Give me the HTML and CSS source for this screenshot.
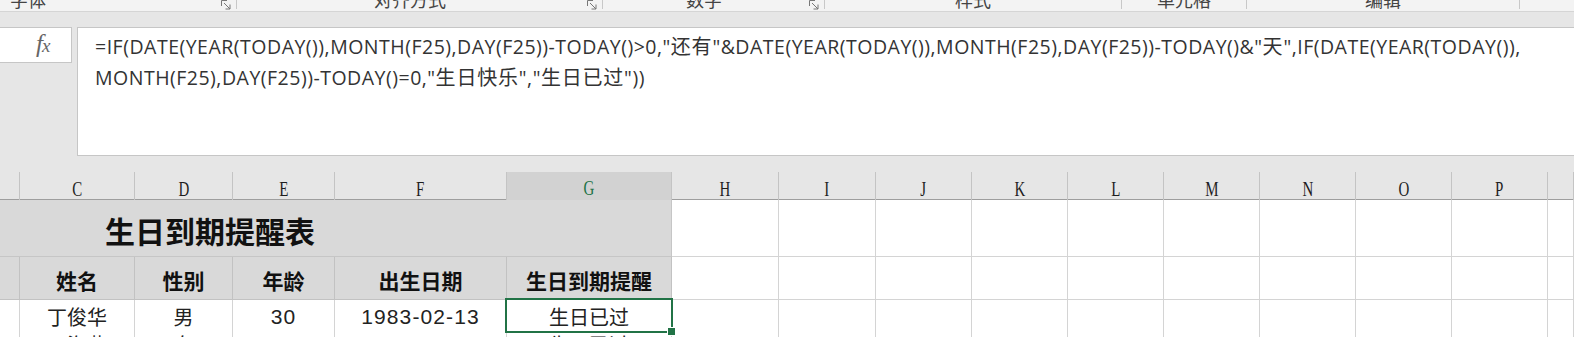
FILE: index.html
```html
<!DOCTYPE html>
<html lang="zh-CN">
<head>
    <meta charset="UTF-8">
    <meta name="viewport" content="width=device-width, initial-scale=1.0">
    <title>生日到期提醒表</title>
    <link rel="stylesheet" href="styles.css">
</head>
<body>

<div class="ribbon">
    <div class="group g-font"><span class="label">字体</span><span class="launcher"><svg width="12" height="12" viewBox="0 0 12 12"><path d="M1.5 7V1.5H7M4 4l6 6M10 5.5V10H5.5" fill="none" stroke="#777" stroke-width="1"/></svg></span></div>
    <div class="group g-align"><span class="label">对齐方式</span><span class="launcher"><svg width="12" height="12" viewBox="0 0 12 12"><path d="M1.5 7V1.5H7M4 4l6 6M10 5.5V10H5.5" fill="none" stroke="#777" stroke-width="1"/></svg></span></div>
    <div class="group g-number"><span class="label">数字</span><span class="launcher"><svg width="12" height="12" viewBox="0 0 12 12"><path d="M1.5 7V1.5H7M4 4l6 6M10 5.5V10H5.5" fill="none" stroke="#777" stroke-width="1"/></svg></span></div>
    <div class="group g-style"><span class="label">样式</span></div>
    <div class="group g-cells"><span class="label">单元格</span></div>
    <div class="group g-edit"><span class="label">编辑</span></div>
    <div class="group g-rest"></div>
</div>

<div class="formula-row">
    <div class="name-box"><span class="fx"><i>f</i><i class="fx-x">x</i></span></div>
    <div class="formula-box">
        <div class="formula">=IF(DATE(YEAR(TODAY()),MONTH(F25),DAY(F25))-TODAY()&gt;0,"<span class="cjk">还有</span>"&amp;DATE(YEAR(TODAY()),MONTH(F25),DAY(F25))-TODAY()&amp;"<span class="cjk">天</span>",IF(DATE(YEAR(TODAY()),<br>MONTH(F25),DAY(F25))-TODAY()=0,"<span class="cjk">生日快乐</span>","<span class="cjk">生日已过</span>"))</div>
    </div>
</div>

<div class="sheet">
    <div class="row col-heads">
        <div class="ch"></div>
        <div class="ch"><span>C</span></div>
        <div class="ch"><span>D</span></div>
        <div class="ch"><span>E</span></div>
        <div class="ch"><span>F</span></div>
        <div class="ch ch-active"><span>G</span></div>
        <div class="ch"><span>H</span></div>
        <div class="ch"><span>I</span></div>
        <div class="ch"><span>J</span></div>
        <div class="ch"><span>K</span></div>
        <div class="ch"><span>L</span></div>
        <div class="ch"><span>M</span></div>
        <div class="ch"><span>N</span></div>
        <div class="ch"><span>O</span></div>
        <div class="ch"><span>P</span></div>
        <div class="ch"></div>
    </div>

    <div class="row title-row">
        <div class="cell title">生日到期提醒表</div>
        <div class="cell"></div><div class="cell"></div><div class="cell"></div><div class="cell"></div><div class="cell"></div>
        <div class="cell"></div><div class="cell"></div><div class="cell"></div><div class="cell"></div><div class="cell"></div>
    </div>

    <div class="row head-row">
        <div class="cell th"></div>
        <div class="cell th">姓名</div>
        <div class="cell th">性别</div>
        <div class="cell th">年龄</div>
        <div class="cell th">出生日期</div>
        <div class="cell th">生日到期提醒</div>
        <div class="cell"></div><div class="cell"></div><div class="cell"></div><div class="cell"></div><div class="cell"></div>
        <div class="cell"></div><div class="cell"></div><div class="cell"></div><div class="cell"></div><div class="cell"></div>
    </div>

    <div class="row data-row">
        <div class="cell"></div>
        <div class="cell">丁俊华</div>
        <div class="cell">男</div>
        <div class="cell num">30</div>
        <div class="cell num">1983-02-13</div>
        <div class="cell sel">生日已过</div>
        <div class="cell"></div><div class="cell"></div><div class="cell"></div><div class="cell"></div><div class="cell"></div>
        <div class="cell"></div><div class="cell"></div><div class="cell"></div><div class="cell"></div><div class="cell"></div>
    </div>

    <div class="row data-row">
        <div class="cell"></div>
        <div class="cell">王海燕</div>
        <div class="cell">女</div>
        <div class="cell num">35</div>
        <div class="cell num">1978-05-16</div>
        <div class="cell">生日已过</div>
        <div class="cell"></div><div class="cell"></div><div class="cell"></div><div class="cell"></div><div class="cell"></div>
        <div class="cell"></div><div class="cell"></div><div class="cell"></div><div class="cell"></div><div class="cell"></div>
    </div>
</div>

</body>
</html>
```

FILE: styles.css
```css
* {
    box-sizing: border-box;
}
body {
    margin: 0;
    width: 1574px;
    height: 337px;
    overflow: hidden;
    background-color: #e6e6e6;
    font-family: "Liberation Sans", "Noto Sans CJK SC", sans-serif;
    color: #222;
}

/* ribbon group names, mostly scrolled off the top */
.ribbon {
    display: flex;
    height: 12px;
    background-color: #f3f3f3;
    border-bottom: 1px solid #d5d5d5;
    overflow: hidden;
    margin-bottom: 15px;
}
.group {
    display: flex;
    align-items: flex-start;
    height: 9px;
    border-right: 1px solid #c8c8c8;
}
.label {
    flex: 1;
    text-align: center;
    font-family: "Noto Sans CJK SC", sans-serif;
    font-size: 18px;
    line-height: 18px;
    margin-top: -10px;
    color: #444;
}
.launcher {
    width: 12px;
    margin: -3px 4px 0 3px;
}
.g-font { width: 237px; }
.g-font .label { text-align: left; padding-left: 10px; }
.g-align { width: 366px; }
.g-number { width: 222px; }
.g-style { width: 297px; }
.g-cells { width: 125px; }
.g-edit { width: 273px; }
.g-rest { flex: 1; border-right: none; }

/* formula bar */
.formula-row {
    display: flex;
    align-items: flex-start;
    gap: 5px;
    height: 129px;
    margin-bottom: 16px;
}
.name-box {
    width: 72px;
    height: 36px;
    background-color: #fff;
    border: 1px solid #c6c6c6;
    border-left: none;
    padding: 2px 0 0 36px;
}
.fx {
    font-family: "Liberation Serif", serif;
    font-size: 25px;
    color: #666;
    letter-spacing: -1px;
}
.fx-x {
    font-size: 19px;
}
.formula-box {
    flex: 1;
    height: 129px;
    background-color: #fff;
    border: 1px solid #c6c6c6;
    border-right: none;
    padding: 3px 0 0 17px;
}
.formula {
    font-family: "Open Sans", "Noto Sans CJK SC", sans-serif;
    font-size: 19.5px;
    line-height: 29.5px;
    letter-spacing: 0.5px;
    color: #333;
    white-space: nowrap;
}
.cjk {
    font-family: "Noto Sans CJK SC", sans-serif;
    font-size: 20px;
    letter-spacing: 0.8px;
}

/* worksheet */
.row {
    display: grid;
    grid-template-columns: 20px 115px 98px 102px 172px 165px 107px 97px 96px 96px 96px 96px 96px 96px 96px 1fr;
}
.col-heads {
    height: 28px;
    background-color: #e6e6e6;
    border-bottom: 1px solid #9e9e9e;
}
.ch {
    border-right: 1px solid #c4c4c4;
    display: flex;
    justify-content: center;
    align-items: center;
    padding-top: 3px;
}
.ch span {
    display: inline-block;
    font-family: "Liberation Serif", serif;
    font-size: 22px;
    transform: scaleX(0.68);
    color: #1e1e1e;
}
.ch-active {
    background-color: #d2d2d2;
    border-bottom: 2px solid #217346;
    margin-bottom: -1px;
}
.ch-active span {
    color: #217346;
}
.cell {
    background-color: #fff;
    border-right: 1px solid #d4d4d4;
    border-bottom: 1px solid #d4d4d4;
    display: flex;
    justify-content: center;
    align-items: center;
    font-size: 20px;
}
.title-row {
    height: 57px;
}
.title {
    grid-column: span 6;
    justify-content: flex-start;
    padding: 4px 0 0 105px;
    background-color: #d9d9d9;
    border-right-color: #c6c6c6;
    border-bottom-color: #c6c6c6;
    font-family: "Noto Sans CJK SC", sans-serif;
    font-size: 30px;
    font-weight: bold;
    color: #111;
}
.head-row {
    height: 43px;
}
.th {
    background-color: #d9d9d9;
    border-color: #c2c2c2;
    padding-top: 4px;
    font-family: "Noto Sans CJK SC", sans-serif;
    font-size: 21px;
    font-weight: bold;
    color: #111;
}
.data-row {
    height: 28px;
}
.data-row .cell {
    font-family: "Noto Sans CJK SC", sans-serif;
    padding-top: 2px;
}
.data-row .num {
    font-family: "Liberation Sans", sans-serif;
    font-size: 21px;
    letter-spacing: 1.1px;
}
.sel {
    position: relative;
}
.sel::after {
    content: "";
    position: absolute;
    left: -2px;
    top: -2px;
    right: -2px;
    bottom: -2px;
    border: 2px solid #217346;
}
.sel::before {
    content: "";
    position: absolute;
    right: -5px;
    bottom: -5px;
    width: 7px;
    height: 7px;
    background-color: #217346;
    border: 1px solid #fff;
    z-index: 1;
}
```
